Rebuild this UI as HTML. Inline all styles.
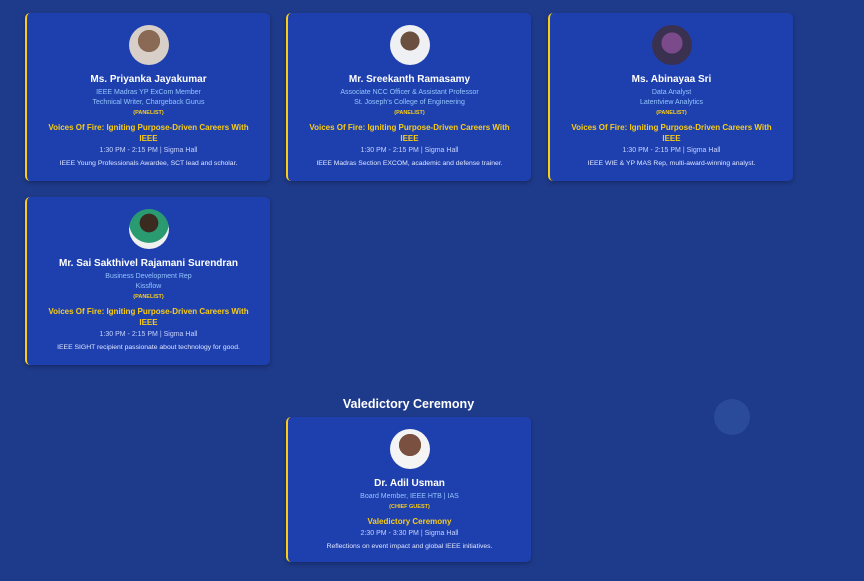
<!DOCTYPE html><html><head><style>
body{margin:0;width:864px;height:581px;background:#1e3a8a;font-family:"Liberation Sans",sans-serif;position:relative;overflow:hidden}
.c{position:absolute;width:245px;background:#1e40af;border-left:2px solid #facc15;border-radius:5px;box-sizing:border-box;text-align:center;padding-top:12px;box-shadow:0 2px 4px rgba(0,0,0,.25)}
.av{width:40px;height:40px;border-radius:50%;margin:0 auto;background:radial-gradient(circle at 50% 40%,#8a6a55 0 35%,#d8d0c8 36%)}
.n{font-weight:bold;font-size:10px;line-height:12px;color:#fff;margin-top:9px}
.r{font-size:7px;line-height:10px;color:#93c5fd}
.p{font-size:5.5px;line-height:11px;color:#facc15;font-weight:bold}
.t{font-size:8px;line-height:11px;color:#facc15;font-weight:bold;margin-top:3px;padding:0 20px}
.tm{font-size:7px;line-height:11px;color:#c7d2fe;margin-top:1px}
.d{font-size:6.8px;line-height:10px;color:#e0e7ff;margin-top:3px;white-space:nowrap}
</style></head><body>
<div class="c" style="left:25px;top:13px;height:168px"><div class="av"></div><div class="n">Ms. Priyanka Jayakumar</div><div class="r" style="margin-top:2px">IEEE Madras YP ExCom Member</div><div class="r">Technical Writer, Chargeback Gurus</div><div class="p">(PANELIST)</div><div class="t">Voices Of Fire: Igniting Purpose-Driven Careers With IEEE</div><div class="tm">1:30 PM - 2:15 PM | Sigma Hall</div><div class="d">IEEE Young Professionals Awardee, SCT lead and scholar.</div></div>
<div class="c" style="left:286px;top:13px;height:168px"><div class="av" style="background:radial-gradient(circle at 50% 40%,#6b5040 0 30%,#eef0f4 31%)"></div><div class="n">Mr. Sreekanth Ramasamy</div><div class="r" style="margin-top:2px">Associate NCC Officer &amp; Assistant Professor</div><div class="r">St. Joseph's College of Engineering</div><div class="p">(PANELIST)</div><div class="t">Voices Of Fire: Igniting Purpose-Driven Careers With IEEE</div><div class="tm">1:30 PM - 2:15 PM | Sigma Hall</div><div class="d">IEEE Madras Section EXCOM, academic and defense trainer.</div></div>
<div class="c" style="left:548px;top:13px;height:168px"><div class="av" style="background:radial-gradient(circle at 50% 45%,#7a4a8a 0 35%,#3a3050 36%)"></div><div class="n">Ms. Abinayaa Sri</div><div class="r" style="margin-top:2px">Data Analyst</div><div class="r">Latentview Analytics</div><div class="p">(PANELIST)</div><div class="t">Voices Of Fire: Igniting Purpose-Driven Careers With IEEE</div><div class="tm">1:30 PM - 2:15 PM | Sigma Hall</div><div class="d">IEEE WIE &amp; YP MAS Rep, multi-award-winning analyst.</div></div>
<div class="c" style="left:25px;top:197px;height:168px"><div class="av" style="background:radial-gradient(circle at 50% 35%,#3a2a20 0 28%,#2a9a70 29% 60%,#f0f0f0 61%)"></div><div class="n">Mr. Sai Sakthivel Rajamani Surendran</div><div class="r" style="margin-top:2px">Business Development Rep</div><div class="r">Kissflow</div><div class="p">(PANELIST)</div><div class="t">Voices Of Fire: Igniting Purpose-Driven Careers With IEEE</div><div class="tm">1:30 PM - 2:15 PM | Sigma Hall</div><div class="d">IEEE SIGHT recipient passionate about technology for good.</div></div>
<div style="position:absolute;left:286px;width:245px;top:397px;text-align:center;color:#fff;font-weight:bold;font-size:12.5px">Valedictory Ceremony</div>
<div style="position:absolute;left:714px;top:399px;width:36px;height:36px;border-radius:50%;background:#2a4a9a"></div>
<div class="c" style="left:286px;top:417px;height:145px"><div class="av" style="background:radial-gradient(circle at 50% 40%,#7a5040 0 35%,#f4f4f4 36%)"></div><div class="n">Dr. Adil Usman</div><div class="r" style="margin-top:2px">Board Member, IEEE HTB | IAS</div><div class="p">(CHIEF GUEST)</div><div class="t">Valedictory Ceremony</div><div class="tm">2:30 PM - 3:30 PM | Sigma Hall</div><div class="d">Reflections on event impact and global IEEE initiatives.</div></div>
</body></html>
